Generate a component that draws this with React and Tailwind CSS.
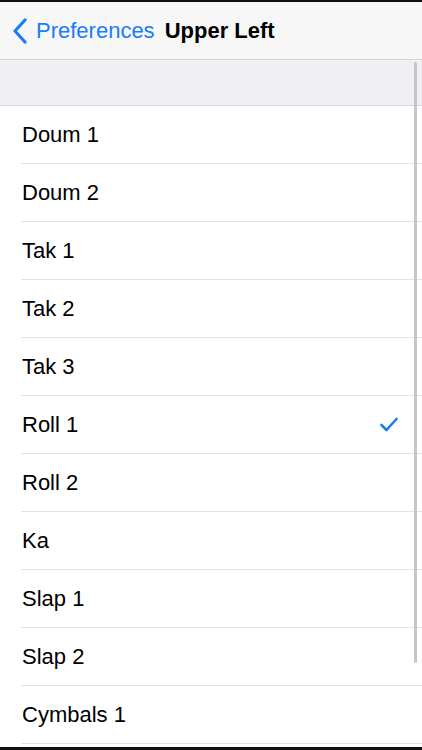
import React from "react";

const ITEMS = [
  "Doum 1",
  "Doum 2",
  "Tak 1",
  "Tak 2",
  "Tak 3",
  "Roll 1",
  "Roll 2",
  "Ka",
  "Slap 1",
  "Slap 2",
  "Cymbals 1",
];

const SELECTED = "Roll 1";

function Chevron() {
  return (
    <svg width="16" height="26" viewBox="0 0 16 26" fill="none">
      <path
        d="M13 2 L3 13 L13 24"
        stroke="#1a7cf6"
        strokeWidth="3.2"
        strokeLinecap="round"
        strokeLinejoin="round"
      />
    </svg>
  );
}

function Check() {
  return (
    <svg width="18" height="15" viewBox="0 0 18 15" fill="none">
      <path
        d="M1.5 8 L6.5 13 L16.5 2"
        stroke="#1a7cf6"
        strokeWidth="2.6"
        strokeLinecap="round"
        strokeLinejoin="round"
      />
    </svg>
  );
}

export default function App() {
  return (
    <div
      className="relative flex flex-col h-[750px] w-full overflow-hidden bg-white"
      style={{ fontFamily: '"Liberation Sans", Arial, sans-serif' }}
    >
      <div className="h-[2px] bg-[#111]" />

      {/* nav bar */}
      <div className="flex items-center h-[58px] bg-[#f7f7f8] border-b border-[#d4d4d8] pl-[12px]">
        <Chevron />
        <span className="ml-[8px] text-[22px] text-[#1a7cf6]">Preferences</span>
        <span className="ml-[10px] text-[22px] font-bold text-black">Upper Left</span>
      </div>

      {/* section header */}
      <div className="h-[46px] bg-[#efeff4] border-b border-[#d8d8dc]" />

      {/* list */}
      <div className="flex-1 overflow-hidden">
        {ITEMS.map((item) => (
          <div key={item} className="flex h-[58px] pl-[21px]">
            <div className="flex flex-1 items-center justify-between border-b border-[#e2e2e4] pr-[24px]">
              <span className="pl-[1px] text-[22px] text-black">{item}</span>
              {item === SELECTED && <Check />}
            </div>
          </div>
        ))}
      </div>

      <div className="h-[3px] bg-[#111]" />

      {/* scroll indicator */}
      <div className="absolute right-[5px] top-[62px] h-[601px] w-[3px] rounded-full bg-[#c6c6c8]" />
    </div>
  );
}
